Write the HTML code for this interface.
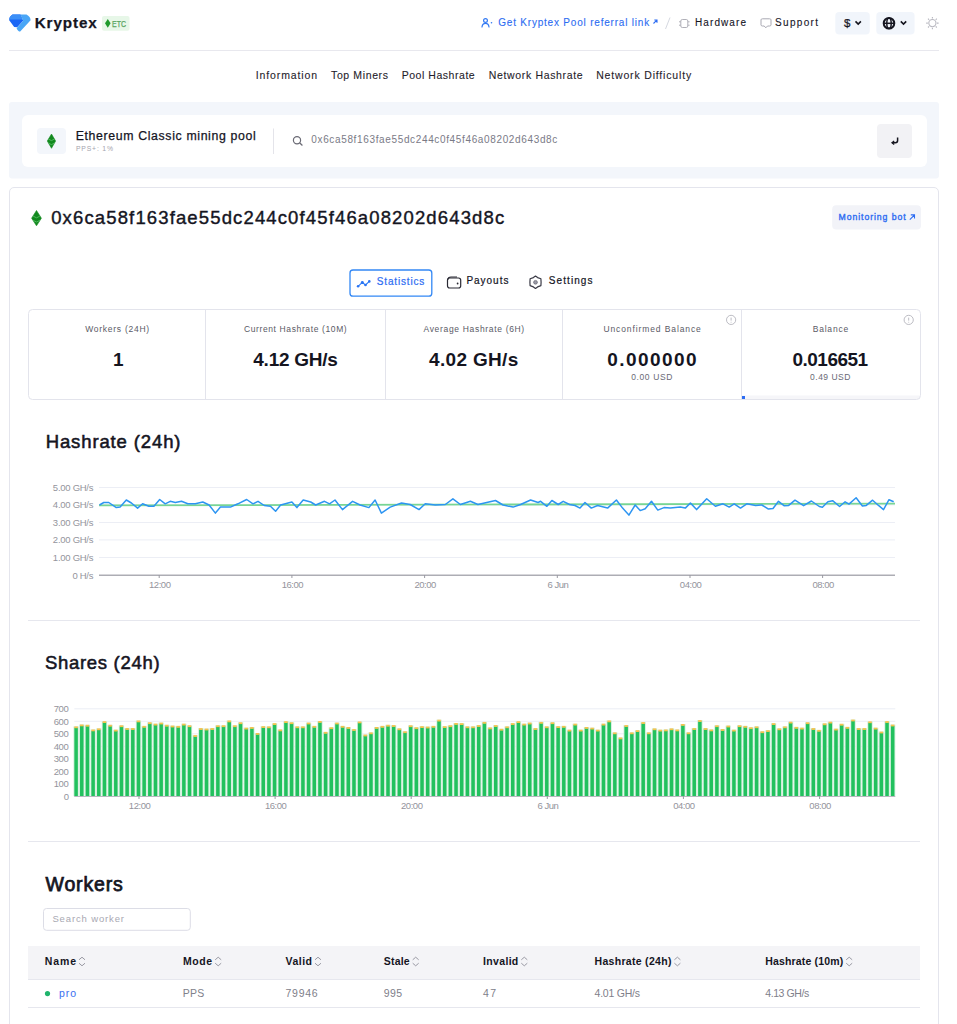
<!DOCTYPE html>
<html><head><meta charset="utf-8">
<style>
html,body{margin:0;padding:0;background:#fff;}
body{width:957px;height:1024px;overflow:hidden;position:relative;font-family:"Liberation Sans",sans-serif;}
.t{position:absolute;white-space:pre;}
.a{position:absolute;box-sizing:border-box;}
svg{position:absolute;overflow:visible;}
</style></head><body>
<!-- header -->
<svg style="left:0;top:0" width="957" height="1024" viewBox="0 0 957 1024">
  <!-- gem logo -->
  <path d="M12.5,14.6 L20.5,14.6 L23.2,20.8 L17.2,27.2 L14.2,27.0 L9.2,20.2 Q9,17 12.5,14.6Z" fill="#1a66f5"/>
  <path d="M12.5,14.6 L20.5,14.6 L22.6,19.4 L9.3,19.4 Q9.6,16.4 12.5,14.6Z" fill="#3b8ff7"/>
  <path d="M20.5,14.6 L26.5,14.6 Q30.5,17 30.6,20.2 L20.2,31.6 Q18,31.6 16.6,28.2 L23.2,20.8Z" fill="#4aa6f6"/>
  <!-- ETC badge -->
  <rect x="102" y="16" width="27.5" height="14.7" rx="2" fill="#e7f7e8"/>
  <path d="M107.8,19 L110.6,23.3 L107.8,27.7 L105,23.3Z" fill="#1f9a2c"/>
  <!-- user plus icon -->
  <circle cx="485.5" cy="20.5" r="1.9" fill="none" stroke="#3279f3" stroke-width="1.2"/>
  <path d="M482,27 Q482.4,23.4 485.5,23.4 Q488.6,23.4 489,27" fill="none" stroke="#3279f3" stroke-width="1.2" stroke-linecap="round"/>
  <circle cx="491.5" cy="22.8" r="0.8" fill="#3279f3"/>
  <!-- small arrow -->
  <path d="M653.5,23.5 L656.8,20.2 M654.3,20 L657,20 L657,22.7" stroke="#2c6cf2" stroke-width="1.1" fill="none"/>
  <!-- slash -->
  <path d="M670,17.5 L665.5,29" stroke="#d0d4dc" stroke-width="0.9"/>
  <!-- chip -->
  <rect x="680.8" y="19.5" width="7" height="8" rx="1.5" fill="none" stroke="#b0b0b8" stroke-width="1"/>
  <path d="M679,21.8 h1.8 M679,25.2 h1.8 M687.8,21.8 h1.8 M687.8,25.2 h1.8" stroke="#b0b0b8" stroke-width="1"/>
  <!-- chat -->
  <path d="M761,19.8 Q761,18.8 762.5,18.8 L769.5,18.8 Q771,18.8 771,19.8 L771,24.8 Q771,26 769.5,26 L767.5,26 L765.8,27.8 L764.2,26 L762.5,26 Q761,26 761,24.8Z" fill="none" stroke="#a8a8b2" stroke-width="1"/>
  <!-- $ button -->
  <rect x="835.3" y="12.1" width="34.5" height="22.5" rx="4" fill="#f1f5fb"/>
  <path d="M855.5,21.4 L858.2,24.1 L860.9,21.4" stroke="#15151f" stroke-width="1.6" fill="none"/>
  <!-- globe button -->
  <rect x="876.3" y="12.1" width="38.3" height="22.5" rx="4" fill="#f1f5fb"/>
  <circle cx="889" cy="23.3" r="5.3" fill="none" stroke="#15151f" stroke-width="2"/>
  <ellipse cx="889" cy="23.3" rx="2.2" ry="5.3" fill="none" stroke="#15151f" stroke-width="1.5"/>
  <path d="M883.6,23.3 h10.8" stroke="#15151f" stroke-width="1.5"/>
  <path d="M900.8,21.4 L903.5,24.1 L906.2,21.4" stroke="#15151f" stroke-width="1.6" fill="none"/>
  <!-- sun -->
  <circle cx="932.4" cy="23.1" r="3.6" fill="none" stroke="#b8b8c0" stroke-width="1.1"/>
  <path d="M932.4,16.9 v1.6 M932.4,27.7 v1.6 M926.2,23.1 h1.6 M937,23.1 h1.6 M928,18.7 l1.1,1.1 M935.7,26.4 l1.1,1.1 M928,27.5 l1.1,-1.1 M935.7,19.8 l1.1,-1.1" stroke="#b8b8c0" stroke-width="1.1"/>
  <!-- header divider -->
  <rect x="9" y="50" width="930" height="1" fill="#e8e8ee"/>

  <!-- search panel -->
  <rect x="9" y="102" width="930" height="76.5" rx="3" fill="#f3f6fb"/>
  <rect x="22" y="115" width="905" height="52" rx="6" fill="#ffffff"/>
  <rect x="37" y="128" width="29" height="26" rx="4" fill="#f3f6fb"/>
  <path d="M51.5,134 L55.6,141 L51.5,148.3 L47.3,141Z" fill="#12891f" stroke="#12891f" stroke-width="0.6" stroke-linejoin="round"/>
  <path d="M48.6,139.2 L51.5,140.6 L54.2,139.2 M48.6,143.2 L51.5,144.6 L54.2,143.2" stroke="#5cc46a" stroke-width="0.8" fill="none"/>
  <rect x="273" y="128.5" width="1" height="25.5" fill="#e4e4ea"/>
  <circle cx="297" cy="140.2" r="3.6" fill="none" stroke="#6a6a74" stroke-width="1.2"/>
  <path d="M299.6,142.8 L302.4,145.5" stroke="#6a6a74" stroke-width="1.2"/>
  <rect x="877" y="124" width="35" height="34" rx="4" fill="#f2f2f5"/>
  <path d="M897.6,137.6 L897.6,140.6 Q897.6,142.8 895.4,142.8 L892.5,142.8" stroke="#15151f" stroke-width="1.5" fill="none"/>
  <path d="M894.2,141 L892,142.8 L894.2,144.6" stroke="#15151f" stroke-width="1.3" fill="none"/>

  <!-- main card -->
  <rect x="9.5" y="187.5" width="929" height="900" rx="4.5" fill="#fff" stroke="#e4e5ed" stroke-width="1"/>
  <!-- eth icon title -->
  <path d="M36.5,210.5 L41.4,218.2 L36.5,225.8 L31.6,218.2Z" fill="#12891f" stroke="#12891f" stroke-width="0.6" stroke-linejoin="round"/>
  <path d="M33.2,216.2 L36.5,217.8 L39.8,216.2 M33.2,220.4 L36.5,222 L39.8,220.4" stroke="#5cc46a" stroke-width="0.8" fill="none"/>
  <!-- monitoring bot -->
  <rect x="832.2" y="205.3" width="88.8" height="24.1" rx="4" fill="#f2f3f8"/>
  <path d="M909.8,219.6 L914.3,215.1 M910.8,214.9 L914.5,214.9 L914.5,218.6" stroke="#2c6cf2" stroke-width="1.1" fill="none"/>

  <!-- tabs -->
  <rect x="350" y="270" width="81.8" height="26.2" rx="3" fill="none" stroke="#3388f5" stroke-width="1.3"/>
  <path d="M358.1,286.3 L362.3,282.3 L365.5,285 L369.3,281.4" stroke="#2f7cf4" stroke-width="1.1" fill="none" stroke-linejoin="round"/>
  <g fill="#2a74f4"><circle cx="358.1" cy="286.3" r="1.3"/><circle cx="362.3" cy="282.3" r="1.4"/><circle cx="365.5" cy="285" r="1.3"/><circle cx="369.3" cy="281.4" r="1.3"/></g>
  <rect x="447.5" y="278" width="13.2" height="10" rx="2.2" fill="none" stroke="#2a2a34" stroke-width="1.2"/>
  <path d="M448,279.5 Q448,277 451,277 L457,277" stroke="#2a2a34" stroke-width="1.1" fill="none"/>
  <circle cx="457.6" cy="283.5" r="0.9" fill="#2a2a34"/>
  <path d="M535.5,276 L537.6,277.6 L540.9,278.8 L541.1,282.3 L540.9,285.6 L537.6,286.9 L535.5,288.5 L533.4,286.9 L530.1,285.6 L529.9,282.3 L530.1,278.8 L533.4,277.6Z" fill="none" stroke="#3a3a46" stroke-width="1.2" stroke-linejoin="round"/>
  <circle cx="535.5" cy="282.3" r="1.9" fill="#9a9aa6" stroke="#5a5a66" stroke-width="0.6"/>

  <!-- stats -->
  <rect x="741" y="395.5" width="179" height="3.5" fill="#f6f6f9"/>
  <rect x="28.5" y="309.5" width="892" height="90" rx="4" fill="none" stroke="#e3e4ec" stroke-width="1"/>
  <rect x="205" y="310" width="1" height="89" fill="#e3e4ec"/>
  <rect x="385" y="310" width="1" height="89" fill="#e3e4ec"/>
  <rect x="562" y="310" width="1" height="89" fill="#e3e4ec"/>
  <rect x="741" y="310" width="1" height="89" fill="#e3e4ec"/>
  <circle cx="731.1" cy="319.9" r="4.6" fill="none" stroke="#b4b4bc" stroke-width="0.9"/>
  <path d="M731.1,317.6 v3 M731.1,321.8 v0.8" stroke="#b4b4bc" stroke-width="0.9"/>
  <circle cx="908.7" cy="319.9" r="4.6" fill="none" stroke="#b4b4bc" stroke-width="0.9"/>
  <path d="M908.7,317.6 v3 M908.7,321.8 v0.8" stroke="#b4b4bc" stroke-width="0.9"/>
  <rect x="742" y="396" width="3" height="3" fill="#2c6cf2"/>

  <!-- hashrate chart -->
  <g fill="#eceef5">
    <rect x="99" y="487" width="796" height="1"/>
    <rect x="99" y="504.4" width="796" height="1"/>
    <rect x="99" y="522" width="796" height="1"/>
    <rect x="99" y="539.4" width="796" height="1"/>
    <rect x="99" y="557" width="796" height="1"/>
  </g>
  <rect x="99" y="574.6" width="796" height="1.2" fill="#9a9aa2"/>
  <g fill="#9a9aa2">
    <rect x="158.7" y="575" width="1" height="3"/>
    <rect x="291.4" y="575" width="1" height="3"/>
    <rect x="424.1" y="575" width="1" height="3"/>
    <rect x="556.8" y="575" width="1" height="3"/>
    <rect x="689.5" y="575" width="1" height="3"/>
    <rect x="822.1" y="575" width="1" height="3"/>
  </g>
  <path d="M99,505.4 L895,503.6" stroke="#62d083" stroke-width="1.8" opacity="0.85"/>
  <polyline points="99.5,505.0 103.8,502.5 108.8,502.5 116.3,507.6 120.1,507.1 126.3,500.0 131.4,503.0 137.6,508.1 142.6,503.8 148.9,506.3 153.9,506.3 159.7,499.5 165.2,503.8 170.2,501.3 175.3,502.5 181.5,501.3 187.8,503.8 195.3,503.8 202.8,502.0 209.1,505.0 215.4,513.1 220.4,507.1 230.4,507.1 237.9,503.8 246.7,499.5 253.0,503.8 258.0,501.3 264.3,505.5 270.5,506.3 275.6,511.3 280.6,505.0 291.9,502.0 296.9,507.6 303.2,500.0 310.7,502.0 315.7,505.0 324.5,501.3 329.5,503.8 335.0,500.0 342.5,509.6 352.6,501.3 360.1,505.0 368.9,507.6 375.1,500.0 381.4,513.1 390.2,507.1 401.5,503.0 410.2,504.5 419.0,509.6 425.3,503.8 435.3,505.0 445.3,504.5 452.9,498.8 460.4,504.5 470.4,501.3 477.9,504.5 495.5,500.5 503.0,505.0 513.1,507.1 520.6,504.5 530.6,500.0 538.1,502.5 540.6,501.3 546.9,506.3 551.9,500.5 558.2,504.5 563.2,501.3 569.5,504.5 575.0,505.5 580.0,508.1 585.0,502.5 591.3,508.1 597.6,505.5 607.6,508.1 616.4,500.0 622.6,508.1 628.9,515.1 635.2,505.0 640.2,510.6 645.2,508.8 651.5,501.3 657.8,510.1 664.0,507.6 670.3,508.1 680.3,507.1 685.3,508.1 690.4,503.0 696.6,509.6 706.7,498.8 715.4,506.3 723.0,503.8 729.2,507.1 734.2,503.8 740.5,508.1 746.8,503.8 755.6,505.5 761.3,504.9 761.8,505.0 768.1,508.8 768.3,509.1 773.0,508.5 778.5,501.3 784.0,505.7 788.7,505.4 795.0,500.2 803.6,505.7 811.4,501.0 819.3,506.5 822.4,507.2 827.9,501.8 832.6,500.7 839.6,506.5 845.1,501.8 849.0,504.1 856.1,497.8 862.4,506.0 866.3,505.4 872.6,500.2 878.8,505.7 883.5,509.6 889.0,499.7 893.7,501.8" fill="none" stroke="#2d95f2" stroke-width="1.5" stroke-linejoin="round"/>
  <rect x="28" y="620" width="892" height="1" fill="#e6e7ee"/>

  <!-- shares chart -->
  <g fill="#eceef5">
    <rect x="74.3" y="708.3" width="821" height="1"/>
    <rect x="74.3" y="720.8" width="821" height="1"/>
    <rect x="74.3" y="733.3" width="821" height="1"/>
    <rect x="74.3" y="745.8" width="821" height="1"/>
    <rect x="74.3" y="758.3" width="821" height="1"/>
    <rect x="74.3" y="770.8" width="821" height="1"/>
    <rect x="74.3" y="783.3" width="821" height="1"/>
  </g>
  <rect x="73.46" y="726.40" width="5.27" height="69.80" fill="#cdeed9"/>
<rect x="74.35" y="727.70" width="3.5" height="68.50" fill="#22c15e"/>
<rect x="74.35" y="726.40" width="3.5" height="1.8" fill="#f5c24e"/>
<rect x="79.14" y="724.50" width="5.27" height="71.70" fill="#cdeed9"/>
<rect x="80.02" y="725.80" width="3.5" height="70.40" fill="#22c15e"/>
<rect x="80.02" y="724.50" width="3.5" height="1.8" fill="#f5c24e"/>
<rect x="84.81" y="724.80" width="5.27" height="71.40" fill="#cdeed9"/>
<rect x="85.69" y="726.10" width="3.5" height="70.10" fill="#22c15e"/>
<rect x="85.69" y="724.80" width="3.5" height="1.8" fill="#f5c24e"/>
<rect x="90.48" y="729.50" width="5.27" height="66.70" fill="#cdeed9"/>
<rect x="91.36" y="730.80" width="3.5" height="65.40" fill="#22c15e"/>
<rect x="91.36" y="729.50" width="3.5" height="1.8" fill="#f5c24e"/>
<rect x="96.15" y="728.40" width="5.27" height="67.80" fill="#cdeed9"/>
<rect x="97.03" y="729.70" width="3.5" height="66.50" fill="#22c15e"/>
<rect x="97.03" y="728.40" width="3.5" height="1.8" fill="#f5c24e"/>
<rect x="101.82" y="721.20" width="5.27" height="75.00" fill="#cdeed9"/>
<rect x="102.70" y="722.50" width="3.5" height="73.70" fill="#22c15e"/>
<rect x="102.70" y="721.20" width="3.5" height="1.8" fill="#f5c24e"/>
<rect x="107.49" y="724.80" width="5.27" height="71.40" fill="#cdeed9"/>
<rect x="108.38" y="726.10" width="3.5" height="70.10" fill="#22c15e"/>
<rect x="108.38" y="724.80" width="3.5" height="1.8" fill="#f5c24e"/>
<rect x="113.16" y="729.70" width="5.27" height="66.50" fill="#cdeed9"/>
<rect x="114.05" y="731.00" width="3.5" height="65.20" fill="#22c15e"/>
<rect x="114.05" y="729.70" width="3.5" height="1.8" fill="#f5c24e"/>
<rect x="118.83" y="725.30" width="5.27" height="70.90" fill="#cdeed9"/>
<rect x="119.72" y="726.60" width="3.5" height="69.60" fill="#22c15e"/>
<rect x="119.72" y="725.30" width="3.5" height="1.8" fill="#f5c24e"/>
<rect x="124.50" y="728.10" width="5.27" height="68.10" fill="#cdeed9"/>
<rect x="125.39" y="729.40" width="3.5" height="66.80" fill="#22c15e"/>
<rect x="125.39" y="728.10" width="3.5" height="1.8" fill="#f5c24e"/>
<rect x="130.17" y="728.10" width="5.27" height="68.10" fill="#cdeed9"/>
<rect x="131.06" y="729.40" width="3.5" height="66.80" fill="#22c15e"/>
<rect x="131.06" y="728.10" width="3.5" height="1.8" fill="#f5c24e"/>
<rect x="135.84" y="720.50" width="5.27" height="75.70" fill="#cdeed9"/>
<rect x="136.73" y="721.80" width="3.5" height="74.40" fill="#22c15e"/>
<rect x="136.73" y="720.50" width="3.5" height="1.8" fill="#f5c24e"/>
<rect x="141.51" y="725.90" width="5.27" height="70.30" fill="#cdeed9"/>
<rect x="142.40" y="727.20" width="3.5" height="69.00" fill="#22c15e"/>
<rect x="142.40" y="725.90" width="3.5" height="1.8" fill="#f5c24e"/>
<rect x="147.19" y="722.30" width="5.27" height="73.90" fill="#cdeed9"/>
<rect x="148.07" y="723.60" width="3.5" height="72.60" fill="#22c15e"/>
<rect x="148.07" y="722.30" width="3.5" height="1.8" fill="#f5c24e"/>
<rect x="152.86" y="723.70" width="5.27" height="72.50" fill="#cdeed9"/>
<rect x="153.74" y="725.00" width="3.5" height="71.20" fill="#22c15e"/>
<rect x="153.74" y="723.70" width="3.5" height="1.8" fill="#f5c24e"/>
<rect x="158.53" y="722.60" width="5.27" height="73.60" fill="#cdeed9"/>
<rect x="159.41" y="723.90" width="3.5" height="72.30" fill="#22c15e"/>
<rect x="159.41" y="722.60" width="3.5" height="1.8" fill="#f5c24e"/>
<rect x="164.20" y="724.80" width="5.27" height="71.40" fill="#cdeed9"/>
<rect x="165.08" y="726.10" width="3.5" height="70.10" fill="#22c15e"/>
<rect x="165.08" y="724.80" width="3.5" height="1.8" fill="#f5c24e"/>
<rect x="169.87" y="725.60" width="5.27" height="70.60" fill="#cdeed9"/>
<rect x="170.75" y="726.90" width="3.5" height="69.30" fill="#22c15e"/>
<rect x="170.75" y="725.60" width="3.5" height="1.8" fill="#f5c24e"/>
<rect x="175.54" y="725.90" width="5.27" height="70.30" fill="#cdeed9"/>
<rect x="176.43" y="727.20" width="3.5" height="69.00" fill="#22c15e"/>
<rect x="176.43" y="725.90" width="3.5" height="1.8" fill="#f5c24e"/>
<rect x="181.21" y="723.70" width="5.27" height="72.50" fill="#cdeed9"/>
<rect x="182.10" y="725.00" width="3.5" height="71.20" fill="#22c15e"/>
<rect x="182.10" y="723.70" width="3.5" height="1.8" fill="#f5c24e"/>
<rect x="186.88" y="725.30" width="5.27" height="70.90" fill="#cdeed9"/>
<rect x="187.77" y="726.60" width="3.5" height="69.60" fill="#22c15e"/>
<rect x="187.77" y="725.30" width="3.5" height="1.8" fill="#f5c24e"/>
<rect x="192.55" y="735.10" width="5.27" height="61.10" fill="#cdeed9"/>
<rect x="193.44" y="736.40" width="3.5" height="59.80" fill="#22c15e"/>
<rect x="193.44" y="735.10" width="3.5" height="1.8" fill="#f5c24e"/>
<rect x="198.22" y="728.10" width="5.27" height="68.10" fill="#cdeed9"/>
<rect x="199.11" y="729.40" width="3.5" height="66.80" fill="#22c15e"/>
<rect x="199.11" y="728.10" width="3.5" height="1.8" fill="#f5c24e"/>
<rect x="203.89" y="728.60" width="5.27" height="67.60" fill="#cdeed9"/>
<rect x="204.78" y="729.90" width="3.5" height="66.30" fill="#22c15e"/>
<rect x="204.78" y="728.60" width="3.5" height="1.8" fill="#f5c24e"/>
<rect x="209.56" y="728.10" width="5.27" height="68.10" fill="#cdeed9"/>
<rect x="210.45" y="729.40" width="3.5" height="66.80" fill="#22c15e"/>
<rect x="210.45" y="728.10" width="3.5" height="1.8" fill="#f5c24e"/>
<rect x="215.24" y="725.30" width="5.27" height="70.90" fill="#cdeed9"/>
<rect x="216.12" y="726.60" width="3.5" height="69.60" fill="#22c15e"/>
<rect x="216.12" y="725.30" width="3.5" height="1.8" fill="#f5c24e"/>
<rect x="220.91" y="725.30" width="5.27" height="70.90" fill="#cdeed9"/>
<rect x="221.79" y="726.60" width="3.5" height="69.60" fill="#22c15e"/>
<rect x="221.79" y="725.30" width="3.5" height="1.8" fill="#f5c24e"/>
<rect x="226.58" y="720.50" width="5.27" height="75.70" fill="#cdeed9"/>
<rect x="227.46" y="721.80" width="3.5" height="74.40" fill="#22c15e"/>
<rect x="227.46" y="720.50" width="3.5" height="1.8" fill="#f5c24e"/>
<rect x="232.25" y="725.30" width="5.27" height="70.90" fill="#cdeed9"/>
<rect x="233.13" y="726.60" width="3.5" height="69.60" fill="#22c15e"/>
<rect x="233.13" y="725.30" width="3.5" height="1.8" fill="#f5c24e"/>
<rect x="237.92" y="722.30" width="5.27" height="73.90" fill="#cdeed9"/>
<rect x="238.80" y="723.60" width="3.5" height="72.60" fill="#22c15e"/>
<rect x="238.80" y="722.30" width="3.5" height="1.8" fill="#f5c24e"/>
<rect x="243.59" y="727.70" width="5.27" height="68.50" fill="#cdeed9"/>
<rect x="244.47" y="729.00" width="3.5" height="67.20" fill="#22c15e"/>
<rect x="244.47" y="727.70" width="3.5" height="1.8" fill="#f5c24e"/>
<rect x="249.26" y="727.00" width="5.27" height="69.20" fill="#cdeed9"/>
<rect x="250.15" y="728.30" width="3.5" height="67.90" fill="#22c15e"/>
<rect x="250.15" y="727.00" width="3.5" height="1.8" fill="#f5c24e"/>
<rect x="254.93" y="733.00" width="5.27" height="63.20" fill="#cdeed9"/>
<rect x="255.82" y="734.30" width="3.5" height="61.90" fill="#22c15e"/>
<rect x="255.82" y="733.00" width="3.5" height="1.8" fill="#f5c24e"/>
<rect x="260.60" y="726.20" width="5.27" height="70.00" fill="#cdeed9"/>
<rect x="261.49" y="727.50" width="3.5" height="68.70" fill="#22c15e"/>
<rect x="261.49" y="726.20" width="3.5" height="1.8" fill="#f5c24e"/>
<rect x="266.27" y="726.40" width="5.27" height="69.80" fill="#cdeed9"/>
<rect x="267.16" y="727.70" width="3.5" height="68.50" fill="#22c15e"/>
<rect x="267.16" y="726.40" width="3.5" height="1.8" fill="#f5c24e"/>
<rect x="271.94" y="723.20" width="5.27" height="73.00" fill="#cdeed9"/>
<rect x="272.83" y="724.50" width="3.5" height="71.70" fill="#22c15e"/>
<rect x="272.83" y="723.20" width="3.5" height="1.8" fill="#f5c24e"/>
<rect x="277.61" y="729.50" width="5.27" height="66.70" fill="#cdeed9"/>
<rect x="278.50" y="730.80" width="3.5" height="65.40" fill="#22c15e"/>
<rect x="278.50" y="729.50" width="3.5" height="1.8" fill="#f5c24e"/>
<rect x="283.29" y="721.20" width="5.27" height="75.00" fill="#cdeed9"/>
<rect x="284.17" y="722.50" width="3.5" height="73.70" fill="#22c15e"/>
<rect x="284.17" y="721.20" width="3.5" height="1.8" fill="#f5c24e"/>
<rect x="288.96" y="722.30" width="5.27" height="73.90" fill="#cdeed9"/>
<rect x="289.84" y="723.60" width="3.5" height="72.60" fill="#22c15e"/>
<rect x="289.84" y="722.30" width="3.5" height="1.8" fill="#f5c24e"/>
<rect x="294.63" y="726.40" width="5.27" height="69.80" fill="#cdeed9"/>
<rect x="295.51" y="727.70" width="3.5" height="68.50" fill="#22c15e"/>
<rect x="295.51" y="726.40" width="3.5" height="1.8" fill="#f5c24e"/>
<rect x="300.30" y="726.40" width="5.27" height="69.80" fill="#cdeed9"/>
<rect x="301.18" y="727.70" width="3.5" height="68.50" fill="#22c15e"/>
<rect x="301.18" y="726.40" width="3.5" height="1.8" fill="#f5c24e"/>
<rect x="305.97" y="722.60" width="5.27" height="73.60" fill="#cdeed9"/>
<rect x="306.85" y="723.90" width="3.5" height="72.30" fill="#22c15e"/>
<rect x="306.85" y="722.60" width="3.5" height="1.8" fill="#f5c24e"/>
<rect x="311.64" y="725.90" width="5.27" height="70.30" fill="#cdeed9"/>
<rect x="312.52" y="727.20" width="3.5" height="69.00" fill="#22c15e"/>
<rect x="312.52" y="725.90" width="3.5" height="1.8" fill="#f5c24e"/>
<rect x="317.31" y="721.00" width="5.27" height="75.20" fill="#cdeed9"/>
<rect x="318.20" y="722.30" width="3.5" height="73.90" fill="#22c15e"/>
<rect x="318.20" y="721.00" width="3.5" height="1.8" fill="#f5c24e"/>
<rect x="322.98" y="731.90" width="5.27" height="64.30" fill="#cdeed9"/>
<rect x="323.87" y="733.20" width="3.5" height="63.00" fill="#22c15e"/>
<rect x="323.87" y="731.90" width="3.5" height="1.8" fill="#f5c24e"/>
<rect x="328.65" y="727.30" width="5.27" height="68.90" fill="#cdeed9"/>
<rect x="329.54" y="728.60" width="3.5" height="67.60" fill="#22c15e"/>
<rect x="329.54" y="727.30" width="3.5" height="1.8" fill="#f5c24e"/>
<rect x="334.32" y="722.60" width="5.27" height="73.60" fill="#cdeed9"/>
<rect x="335.21" y="723.90" width="3.5" height="72.30" fill="#22c15e"/>
<rect x="335.21" y="722.60" width="3.5" height="1.8" fill="#f5c24e"/>
<rect x="339.99" y="725.90" width="5.27" height="70.30" fill="#cdeed9"/>
<rect x="340.88" y="727.20" width="3.5" height="69.00" fill="#22c15e"/>
<rect x="340.88" y="725.90" width="3.5" height="1.8" fill="#f5c24e"/>
<rect x="345.66" y="727.00" width="5.27" height="69.20" fill="#cdeed9"/>
<rect x="346.55" y="728.30" width="3.5" height="67.90" fill="#22c15e"/>
<rect x="346.55" y="727.00" width="3.5" height="1.8" fill="#f5c24e"/>
<rect x="351.34" y="729.10" width="5.27" height="67.10" fill="#cdeed9"/>
<rect x="352.22" y="730.40" width="3.5" height="65.80" fill="#22c15e"/>
<rect x="352.22" y="729.10" width="3.5" height="1.8" fill="#f5c24e"/>
<rect x="357.01" y="721.50" width="5.27" height="74.70" fill="#cdeed9"/>
<rect x="357.89" y="722.80" width="3.5" height="73.40" fill="#22c15e"/>
<rect x="357.89" y="721.50" width="3.5" height="1.8" fill="#f5c24e"/>
<rect x="362.68" y="734.60" width="5.27" height="61.60" fill="#cdeed9"/>
<rect x="363.56" y="735.90" width="3.5" height="60.30" fill="#22c15e"/>
<rect x="363.56" y="734.60" width="3.5" height="1.8" fill="#f5c24e"/>
<rect x="368.35" y="732.40" width="5.27" height="63.80" fill="#cdeed9"/>
<rect x="369.23" y="733.70" width="3.5" height="62.50" fill="#22c15e"/>
<rect x="369.23" y="732.40" width="3.5" height="1.8" fill="#f5c24e"/>
<rect x="374.02" y="727.00" width="5.27" height="69.20" fill="#cdeed9"/>
<rect x="374.90" y="728.30" width="3.5" height="67.90" fill="#22c15e"/>
<rect x="374.90" y="727.00" width="3.5" height="1.8" fill="#f5c24e"/>
<rect x="379.69" y="725.90" width="5.27" height="70.30" fill="#cdeed9"/>
<rect x="380.58" y="727.20" width="3.5" height="69.00" fill="#22c15e"/>
<rect x="380.58" y="725.90" width="3.5" height="1.8" fill="#f5c24e"/>
<rect x="385.36" y="724.80" width="5.27" height="71.40" fill="#cdeed9"/>
<rect x="386.25" y="726.10" width="3.5" height="70.10" fill="#22c15e"/>
<rect x="386.25" y="724.80" width="3.5" height="1.8" fill="#f5c24e"/>
<rect x="391.03" y="725.10" width="5.27" height="71.10" fill="#cdeed9"/>
<rect x="391.92" y="726.40" width="3.5" height="69.80" fill="#22c15e"/>
<rect x="391.92" y="725.10" width="3.5" height="1.8" fill="#f5c24e"/>
<rect x="396.70" y="728.40" width="5.27" height="67.80" fill="#cdeed9"/>
<rect x="397.59" y="729.70" width="3.5" height="66.50" fill="#22c15e"/>
<rect x="397.59" y="728.40" width="3.5" height="1.8" fill="#f5c24e"/>
<rect x="402.37" y="731.30" width="5.27" height="64.90" fill="#cdeed9"/>
<rect x="403.26" y="732.60" width="3.5" height="63.60" fill="#22c15e"/>
<rect x="403.26" y="731.30" width="3.5" height="1.8" fill="#f5c24e"/>
<rect x="408.04" y="725.30" width="5.27" height="70.90" fill="#cdeed9"/>
<rect x="408.93" y="726.60" width="3.5" height="69.60" fill="#22c15e"/>
<rect x="408.93" y="725.30" width="3.5" height="1.8" fill="#f5c24e"/>
<rect x="413.71" y="727.30" width="5.27" height="68.90" fill="#cdeed9"/>
<rect x="414.60" y="728.60" width="3.5" height="67.60" fill="#22c15e"/>
<rect x="414.60" y="727.30" width="3.5" height="1.8" fill="#f5c24e"/>
<rect x="419.39" y="726.20" width="5.27" height="70.00" fill="#cdeed9"/>
<rect x="420.27" y="727.50" width="3.5" height="68.70" fill="#22c15e"/>
<rect x="420.27" y="726.20" width="3.5" height="1.8" fill="#f5c24e"/>
<rect x="425.06" y="726.60" width="5.27" height="69.60" fill="#cdeed9"/>
<rect x="425.94" y="727.90" width="3.5" height="68.30" fill="#22c15e"/>
<rect x="425.94" y="726.60" width="3.5" height="1.8" fill="#f5c24e"/>
<rect x="430.73" y="725.90" width="5.27" height="70.30" fill="#cdeed9"/>
<rect x="431.61" y="727.20" width="3.5" height="69.00" fill="#22c15e"/>
<rect x="431.61" y="725.90" width="3.5" height="1.8" fill="#f5c24e"/>
<rect x="436.40" y="719.70" width="5.27" height="76.50" fill="#cdeed9"/>
<rect x="437.28" y="721.00" width="3.5" height="75.20" fill="#22c15e"/>
<rect x="437.28" y="719.70" width="3.5" height="1.8" fill="#f5c24e"/>
<rect x="442.07" y="726.20" width="5.27" height="70.00" fill="#cdeed9"/>
<rect x="442.95" y="727.50" width="3.5" height="68.70" fill="#22c15e"/>
<rect x="442.95" y="726.20" width="3.5" height="1.8" fill="#f5c24e"/>
<rect x="447.74" y="725.30" width="5.27" height="70.90" fill="#cdeed9"/>
<rect x="448.62" y="726.60" width="3.5" height="69.60" fill="#22c15e"/>
<rect x="448.62" y="725.30" width="3.5" height="1.8" fill="#f5c24e"/>
<rect x="453.41" y="723.00" width="5.27" height="73.20" fill="#cdeed9"/>
<rect x="454.30" y="724.30" width="3.5" height="71.90" fill="#22c15e"/>
<rect x="454.30" y="723.00" width="3.5" height="1.8" fill="#f5c24e"/>
<rect x="459.08" y="723.20" width="5.27" height="73.00" fill="#cdeed9"/>
<rect x="459.97" y="724.50" width="3.5" height="71.70" fill="#22c15e"/>
<rect x="459.97" y="723.20" width="3.5" height="1.8" fill="#f5c24e"/>
<rect x="464.75" y="726.40" width="5.27" height="69.80" fill="#cdeed9"/>
<rect x="465.64" y="727.70" width="3.5" height="68.50" fill="#22c15e"/>
<rect x="465.64" y="726.40" width="3.5" height="1.8" fill="#f5c24e"/>
<rect x="470.42" y="726.40" width="5.27" height="69.80" fill="#cdeed9"/>
<rect x="471.31" y="727.70" width="3.5" height="68.50" fill="#22c15e"/>
<rect x="471.31" y="726.40" width="3.5" height="1.8" fill="#f5c24e"/>
<rect x="476.09" y="725.10" width="5.27" height="71.10" fill="#cdeed9"/>
<rect x="476.98" y="726.40" width="3.5" height="69.80" fill="#22c15e"/>
<rect x="476.98" y="725.10" width="3.5" height="1.8" fill="#f5c24e"/>
<rect x="481.76" y="721.90" width="5.27" height="74.30" fill="#cdeed9"/>
<rect x="482.65" y="723.20" width="3.5" height="73.00" fill="#22c15e"/>
<rect x="482.65" y="721.90" width="3.5" height="1.8" fill="#f5c24e"/>
<rect x="487.44" y="727.50" width="5.27" height="68.70" fill="#cdeed9"/>
<rect x="488.32" y="728.80" width="3.5" height="67.40" fill="#22c15e"/>
<rect x="488.32" y="727.50" width="3.5" height="1.8" fill="#f5c24e"/>
<rect x="493.11" y="725.10" width="5.27" height="71.10" fill="#cdeed9"/>
<rect x="493.99" y="726.40" width="3.5" height="69.80" fill="#22c15e"/>
<rect x="493.99" y="725.10" width="3.5" height="1.8" fill="#f5c24e"/>
<rect x="498.78" y="728.80" width="5.27" height="67.40" fill="#cdeed9"/>
<rect x="499.66" y="730.10" width="3.5" height="66.10" fill="#22c15e"/>
<rect x="499.66" y="728.80" width="3.5" height="1.8" fill="#f5c24e"/>
<rect x="504.45" y="726.40" width="5.27" height="69.80" fill="#cdeed9"/>
<rect x="505.33" y="727.70" width="3.5" height="68.50" fill="#22c15e"/>
<rect x="505.33" y="726.40" width="3.5" height="1.8" fill="#f5c24e"/>
<rect x="510.12" y="723.20" width="5.27" height="73.00" fill="#cdeed9"/>
<rect x="511.00" y="724.50" width="3.5" height="71.70" fill="#22c15e"/>
<rect x="511.00" y="723.20" width="3.5" height="1.8" fill="#f5c24e"/>
<rect x="515.79" y="721.20" width="5.27" height="75.00" fill="#cdeed9"/>
<rect x="516.67" y="722.50" width="3.5" height="73.70" fill="#22c15e"/>
<rect x="516.67" y="721.20" width="3.5" height="1.8" fill="#f5c24e"/>
<rect x="521.46" y="723.70" width="5.27" height="72.50" fill="#cdeed9"/>
<rect x="522.35" y="725.00" width="3.5" height="71.20" fill="#22c15e"/>
<rect x="522.35" y="723.70" width="3.5" height="1.8" fill="#f5c24e"/>
<rect x="527.13" y="722.60" width="5.27" height="73.60" fill="#cdeed9"/>
<rect x="528.02" y="723.90" width="3.5" height="72.30" fill="#22c15e"/>
<rect x="528.02" y="722.60" width="3.5" height="1.8" fill="#f5c24e"/>
<rect x="532.80" y="728.10" width="5.27" height="68.10" fill="#cdeed9"/>
<rect x="533.69" y="729.40" width="3.5" height="66.80" fill="#22c15e"/>
<rect x="533.69" y="728.10" width="3.5" height="1.8" fill="#f5c24e"/>
<rect x="538.47" y="721.90" width="5.27" height="74.30" fill="#cdeed9"/>
<rect x="539.36" y="723.20" width="3.5" height="73.00" fill="#22c15e"/>
<rect x="539.36" y="721.90" width="3.5" height="1.8" fill="#f5c24e"/>
<rect x="544.14" y="726.40" width="5.27" height="69.80" fill="#cdeed9"/>
<rect x="545.03" y="727.70" width="3.5" height="68.50" fill="#22c15e"/>
<rect x="545.03" y="726.40" width="3.5" height="1.8" fill="#f5c24e"/>
<rect x="549.81" y="722.30" width="5.27" height="73.90" fill="#cdeed9"/>
<rect x="550.70" y="723.60" width="3.5" height="72.60" fill="#22c15e"/>
<rect x="550.70" y="722.30" width="3.5" height="1.8" fill="#f5c24e"/>
<rect x="555.49" y="726.20" width="5.27" height="70.00" fill="#cdeed9"/>
<rect x="556.37" y="727.50" width="3.5" height="68.70" fill="#22c15e"/>
<rect x="556.37" y="726.20" width="3.5" height="1.8" fill="#f5c24e"/>
<rect x="561.16" y="725.90" width="5.27" height="70.30" fill="#cdeed9"/>
<rect x="562.04" y="727.20" width="3.5" height="69.00" fill="#22c15e"/>
<rect x="562.04" y="725.90" width="3.5" height="1.8" fill="#f5c24e"/>
<rect x="566.83" y="729.70" width="5.27" height="66.50" fill="#cdeed9"/>
<rect x="567.71" y="731.00" width="3.5" height="65.20" fill="#22c15e"/>
<rect x="567.71" y="729.70" width="3.5" height="1.8" fill="#f5c24e"/>
<rect x="572.50" y="723.70" width="5.27" height="72.50" fill="#cdeed9"/>
<rect x="573.38" y="725.00" width="3.5" height="71.20" fill="#22c15e"/>
<rect x="573.38" y="723.70" width="3.5" height="1.8" fill="#f5c24e"/>
<rect x="578.17" y="729.70" width="5.27" height="66.50" fill="#cdeed9"/>
<rect x="579.05" y="731.00" width="3.5" height="65.20" fill="#22c15e"/>
<rect x="579.05" y="729.70" width="3.5" height="1.8" fill="#f5c24e"/>
<rect x="583.84" y="727.00" width="5.27" height="69.20" fill="#cdeed9"/>
<rect x="584.73" y="728.30" width="3.5" height="67.90" fill="#22c15e"/>
<rect x="584.73" y="727.00" width="3.5" height="1.8" fill="#f5c24e"/>
<rect x="589.51" y="727.70" width="5.27" height="68.50" fill="#cdeed9"/>
<rect x="590.40" y="729.00" width="3.5" height="67.20" fill="#22c15e"/>
<rect x="590.40" y="727.70" width="3.5" height="1.8" fill="#f5c24e"/>
<rect x="595.18" y="729.70" width="5.27" height="66.50" fill="#cdeed9"/>
<rect x="596.07" y="731.00" width="3.5" height="65.20" fill="#22c15e"/>
<rect x="596.07" y="729.70" width="3.5" height="1.8" fill="#f5c24e"/>
<rect x="600.85" y="723.70" width="5.27" height="72.50" fill="#cdeed9"/>
<rect x="601.74" y="725.00" width="3.5" height="71.20" fill="#22c15e"/>
<rect x="601.74" y="723.70" width="3.5" height="1.8" fill="#f5c24e"/>
<rect x="606.52" y="720.50" width="5.27" height="75.70" fill="#cdeed9"/>
<rect x="607.41" y="721.80" width="3.5" height="74.40" fill="#22c15e"/>
<rect x="607.41" y="720.50" width="3.5" height="1.8" fill="#f5c24e"/>
<rect x="612.19" y="732.40" width="5.27" height="63.80" fill="#cdeed9"/>
<rect x="613.08" y="733.70" width="3.5" height="62.50" fill="#22c15e"/>
<rect x="613.08" y="732.40" width="3.5" height="1.8" fill="#f5c24e"/>
<rect x="617.86" y="737.50" width="5.27" height="58.70" fill="#cdeed9"/>
<rect x="618.75" y="738.80" width="3.5" height="57.40" fill="#22c15e"/>
<rect x="618.75" y="737.50" width="3.5" height="1.8" fill="#f5c24e"/>
<rect x="623.54" y="725.10" width="5.27" height="71.10" fill="#cdeed9"/>
<rect x="624.42" y="726.40" width="3.5" height="69.80" fill="#22c15e"/>
<rect x="624.42" y="725.10" width="3.5" height="1.8" fill="#f5c24e"/>
<rect x="629.21" y="732.40" width="5.27" height="63.80" fill="#cdeed9"/>
<rect x="630.09" y="733.70" width="3.5" height="62.50" fill="#22c15e"/>
<rect x="630.09" y="732.40" width="3.5" height="1.8" fill="#f5c24e"/>
<rect x="634.88" y="730.20" width="5.27" height="66.00" fill="#cdeed9"/>
<rect x="635.76" y="731.50" width="3.5" height="64.70" fill="#22c15e"/>
<rect x="635.76" y="730.20" width="3.5" height="1.8" fill="#f5c24e"/>
<rect x="640.55" y="722.10" width="5.27" height="74.10" fill="#cdeed9"/>
<rect x="641.43" y="723.40" width="3.5" height="72.80" fill="#22c15e"/>
<rect x="641.43" y="722.10" width="3.5" height="1.8" fill="#f5c24e"/>
<rect x="646.22" y="732.40" width="5.27" height="63.80" fill="#cdeed9"/>
<rect x="647.10" y="733.70" width="3.5" height="62.50" fill="#22c15e"/>
<rect x="647.10" y="732.40" width="3.5" height="1.8" fill="#f5c24e"/>
<rect x="651.89" y="728.40" width="5.27" height="67.80" fill="#cdeed9"/>
<rect x="652.77" y="729.70" width="3.5" height="66.50" fill="#22c15e"/>
<rect x="652.77" y="728.40" width="3.5" height="1.8" fill="#f5c24e"/>
<rect x="657.56" y="729.70" width="5.27" height="66.50" fill="#cdeed9"/>
<rect x="658.45" y="731.00" width="3.5" height="65.20" fill="#22c15e"/>
<rect x="658.45" y="729.70" width="3.5" height="1.8" fill="#f5c24e"/>
<rect x="663.23" y="729.50" width="5.27" height="66.70" fill="#cdeed9"/>
<rect x="664.12" y="730.80" width="3.5" height="65.40" fill="#22c15e"/>
<rect x="664.12" y="729.50" width="3.5" height="1.8" fill="#f5c24e"/>
<rect x="668.90" y="728.40" width="5.27" height="67.80" fill="#cdeed9"/>
<rect x="669.79" y="729.70" width="3.5" height="66.50" fill="#22c15e"/>
<rect x="669.79" y="728.40" width="3.5" height="1.8" fill="#f5c24e"/>
<rect x="674.57" y="729.50" width="5.27" height="66.70" fill="#cdeed9"/>
<rect x="675.46" y="730.80" width="3.5" height="65.40" fill="#22c15e"/>
<rect x="675.46" y="729.50" width="3.5" height="1.8" fill="#f5c24e"/>
<rect x="680.24" y="724.00" width="5.27" height="72.20" fill="#cdeed9"/>
<rect x="681.13" y="725.30" width="3.5" height="70.90" fill="#22c15e"/>
<rect x="681.13" y="724.00" width="3.5" height="1.8" fill="#f5c24e"/>
<rect x="685.91" y="732.40" width="5.27" height="63.80" fill="#cdeed9"/>
<rect x="686.80" y="733.70" width="3.5" height="62.50" fill="#22c15e"/>
<rect x="686.80" y="732.40" width="3.5" height="1.8" fill="#f5c24e"/>
<rect x="691.59" y="728.10" width="5.27" height="68.10" fill="#cdeed9"/>
<rect x="692.47" y="729.40" width="3.5" height="66.80" fill="#22c15e"/>
<rect x="692.47" y="728.10" width="3.5" height="1.8" fill="#f5c24e"/>
<rect x="697.26" y="720.10" width="5.27" height="76.10" fill="#cdeed9"/>
<rect x="698.14" y="721.40" width="3.5" height="74.80" fill="#22c15e"/>
<rect x="698.14" y="720.10" width="3.5" height="1.8" fill="#f5c24e"/>
<rect x="702.93" y="728.10" width="5.27" height="68.10" fill="#cdeed9"/>
<rect x="703.81" y="729.40" width="3.5" height="66.80" fill="#22c15e"/>
<rect x="703.81" y="728.10" width="3.5" height="1.8" fill="#f5c24e"/>
<rect x="708.60" y="729.50" width="5.27" height="66.70" fill="#cdeed9"/>
<rect x="709.48" y="730.80" width="3.5" height="65.40" fill="#22c15e"/>
<rect x="709.48" y="729.50" width="3.5" height="1.8" fill="#f5c24e"/>
<rect x="714.27" y="725.30" width="5.27" height="70.90" fill="#cdeed9"/>
<rect x="715.15" y="726.60" width="3.5" height="69.60" fill="#22c15e"/>
<rect x="715.15" y="725.30" width="3.5" height="1.8" fill="#f5c24e"/>
<rect x="719.94" y="729.10" width="5.27" height="67.10" fill="#cdeed9"/>
<rect x="720.83" y="730.40" width="3.5" height="65.80" fill="#22c15e"/>
<rect x="720.83" y="729.10" width="3.5" height="1.8" fill="#f5c24e"/>
<rect x="725.61" y="725.60" width="5.27" height="70.60" fill="#cdeed9"/>
<rect x="726.50" y="726.90" width="3.5" height="69.30" fill="#22c15e"/>
<rect x="726.50" y="725.60" width="3.5" height="1.8" fill="#f5c24e"/>
<rect x="731.28" y="729.70" width="5.27" height="66.50" fill="#cdeed9"/>
<rect x="732.17" y="731.00" width="3.5" height="65.20" fill="#22c15e"/>
<rect x="732.17" y="729.70" width="3.5" height="1.8" fill="#f5c24e"/>
<rect x="736.95" y="725.30" width="5.27" height="70.90" fill="#cdeed9"/>
<rect x="737.84" y="726.60" width="3.5" height="69.60" fill="#22c15e"/>
<rect x="737.84" y="725.30" width="3.5" height="1.8" fill="#f5c24e"/>
<rect x="742.62" y="725.90" width="5.27" height="70.30" fill="#cdeed9"/>
<rect x="743.51" y="727.20" width="3.5" height="69.00" fill="#22c15e"/>
<rect x="743.51" y="725.90" width="3.5" height="1.8" fill="#f5c24e"/>
<rect x="748.29" y="727.30" width="5.27" height="68.90" fill="#cdeed9"/>
<rect x="749.18" y="728.60" width="3.5" height="67.60" fill="#22c15e"/>
<rect x="749.18" y="727.30" width="3.5" height="1.8" fill="#f5c24e"/>
<rect x="753.96" y="726.40" width="5.27" height="69.80" fill="#cdeed9"/>
<rect x="754.85" y="727.70" width="3.5" height="68.50" fill="#22c15e"/>
<rect x="754.85" y="726.40" width="3.5" height="1.8" fill="#f5c24e"/>
<rect x="759.64" y="731.30" width="5.27" height="64.90" fill="#cdeed9"/>
<rect x="760.52" y="732.60" width="3.5" height="63.60" fill="#22c15e"/>
<rect x="760.52" y="731.30" width="3.5" height="1.8" fill="#f5c24e"/>
<rect x="765.31" y="730.20" width="5.27" height="66.00" fill="#cdeed9"/>
<rect x="766.19" y="731.50" width="3.5" height="64.70" fill="#22c15e"/>
<rect x="766.19" y="730.20" width="3.5" height="1.8" fill="#f5c24e"/>
<rect x="770.98" y="723.20" width="5.27" height="73.00" fill="#cdeed9"/>
<rect x="771.86" y="724.50" width="3.5" height="71.70" fill="#22c15e"/>
<rect x="771.86" y="723.20" width="3.5" height="1.8" fill="#f5c24e"/>
<rect x="776.65" y="728.40" width="5.27" height="67.80" fill="#cdeed9"/>
<rect x="777.53" y="729.70" width="3.5" height="66.50" fill="#22c15e"/>
<rect x="777.53" y="728.40" width="3.5" height="1.8" fill="#f5c24e"/>
<rect x="782.32" y="726.40" width="5.27" height="69.80" fill="#cdeed9"/>
<rect x="783.20" y="727.70" width="3.5" height="68.50" fill="#22c15e"/>
<rect x="783.20" y="726.40" width="3.5" height="1.8" fill="#f5c24e"/>
<rect x="787.99" y="721.70" width="5.27" height="74.50" fill="#cdeed9"/>
<rect x="788.88" y="723.00" width="3.5" height="73.20" fill="#22c15e"/>
<rect x="788.88" y="721.70" width="3.5" height="1.8" fill="#f5c24e"/>
<rect x="793.66" y="726.90" width="5.27" height="69.30" fill="#cdeed9"/>
<rect x="794.55" y="728.20" width="3.5" height="68.00" fill="#22c15e"/>
<rect x="794.55" y="726.90" width="3.5" height="1.8" fill="#f5c24e"/>
<rect x="799.33" y="727.70" width="5.27" height="68.50" fill="#cdeed9"/>
<rect x="800.22" y="729.00" width="3.5" height="67.20" fill="#22c15e"/>
<rect x="800.22" y="727.70" width="3.5" height="1.8" fill="#f5c24e"/>
<rect x="805.00" y="722.30" width="5.27" height="73.90" fill="#cdeed9"/>
<rect x="805.89" y="723.60" width="3.5" height="72.60" fill="#22c15e"/>
<rect x="805.89" y="722.30" width="3.5" height="1.8" fill="#f5c24e"/>
<rect x="810.67" y="728.10" width="5.27" height="68.10" fill="#cdeed9"/>
<rect x="811.56" y="729.40" width="3.5" height="66.80" fill="#22c15e"/>
<rect x="811.56" y="728.10" width="3.5" height="1.8" fill="#f5c24e"/>
<rect x="816.34" y="729.90" width="5.27" height="66.30" fill="#cdeed9"/>
<rect x="817.23" y="731.20" width="3.5" height="65.00" fill="#22c15e"/>
<rect x="817.23" y="729.90" width="3.5" height="1.8" fill="#f5c24e"/>
<rect x="822.01" y="723.40" width="5.27" height="72.80" fill="#cdeed9"/>
<rect x="822.90" y="724.70" width="3.5" height="71.50" fill="#22c15e"/>
<rect x="822.90" y="723.40" width="3.5" height="1.8" fill="#f5c24e"/>
<rect x="827.69" y="721.70" width="5.27" height="74.50" fill="#cdeed9"/>
<rect x="828.57" y="723.00" width="3.5" height="73.20" fill="#22c15e"/>
<rect x="828.57" y="721.70" width="3.5" height="1.8" fill="#f5c24e"/>
<rect x="833.36" y="728.70" width="5.27" height="67.50" fill="#cdeed9"/>
<rect x="834.24" y="730.00" width="3.5" height="66.20" fill="#22c15e"/>
<rect x="834.24" y="728.70" width="3.5" height="1.8" fill="#f5c24e"/>
<rect x="839.03" y="723.80" width="5.27" height="72.40" fill="#cdeed9"/>
<rect x="839.91" y="725.10" width="3.5" height="71.10" fill="#22c15e"/>
<rect x="839.91" y="723.80" width="3.5" height="1.8" fill="#f5c24e"/>
<rect x="844.70" y="726.90" width="5.27" height="69.30" fill="#cdeed9"/>
<rect x="845.58" y="728.20" width="3.5" height="68.00" fill="#22c15e"/>
<rect x="845.58" y="726.90" width="3.5" height="1.8" fill="#f5c24e"/>
<rect x="850.37" y="719.60" width="5.27" height="76.60" fill="#cdeed9"/>
<rect x="851.25" y="720.90" width="3.5" height="75.30" fill="#22c15e"/>
<rect x="851.25" y="719.60" width="3.5" height="1.8" fill="#f5c24e"/>
<rect x="856.04" y="728.10" width="5.27" height="68.10" fill="#cdeed9"/>
<rect x="856.93" y="729.40" width="3.5" height="66.80" fill="#22c15e"/>
<rect x="856.93" y="728.10" width="3.5" height="1.8" fill="#f5c24e"/>
<rect x="861.71" y="728.10" width="5.27" height="68.10" fill="#cdeed9"/>
<rect x="862.60" y="729.40" width="3.5" height="66.80" fill="#22c15e"/>
<rect x="862.60" y="728.10" width="3.5" height="1.8" fill="#f5c24e"/>
<rect x="867.38" y="721.40" width="5.27" height="74.80" fill="#cdeed9"/>
<rect x="868.27" y="722.70" width="3.5" height="73.50" fill="#22c15e"/>
<rect x="868.27" y="721.40" width="3.5" height="1.8" fill="#f5c24e"/>
<rect x="873.05" y="727.70" width="5.27" height="68.50" fill="#cdeed9"/>
<rect x="873.94" y="729.00" width="3.5" height="67.20" fill="#22c15e"/>
<rect x="873.94" y="727.70" width="3.5" height="1.8" fill="#f5c24e"/>
<rect x="878.72" y="731.60" width="5.27" height="64.60" fill="#cdeed9"/>
<rect x="879.61" y="732.90" width="3.5" height="63.30" fill="#22c15e"/>
<rect x="879.61" y="731.60" width="3.5" height="1.8" fill="#f5c24e"/>
<rect x="884.39" y="721.10" width="5.27" height="75.10" fill="#cdeed9"/>
<rect x="885.28" y="722.40" width="3.5" height="73.80" fill="#22c15e"/>
<rect x="885.28" y="721.10" width="3.5" height="1.8" fill="#f5c24e"/>
<rect x="890.06" y="724.60" width="5.27" height="71.60" fill="#cdeed9"/>
<rect x="890.95" y="725.90" width="3.5" height="70.30" fill="#22c15e"/>
<rect x="890.95" y="724.60" width="3.5" height="1.8" fill="#f5c24e"/>
  <rect x="74.3" y="796" width="821" height="1" fill="#b8b8c0"/>
  <g fill="#9a9aa2">
    <rect x="138.5" y="796" width="1" height="3"/>
    <rect x="274.6" y="796" width="1" height="3"/>
    <rect x="410.7" y="796" width="1" height="3"/>
    <rect x="546.8" y="796" width="1" height="3"/>
    <rect x="682.9" y="796" width="1" height="3"/>
    <rect x="819.1" y="796" width="1" height="3"/>
  </g>
  <rect x="28" y="841" width="892" height="1" fill="#e6e7ee"/>

  <!-- workers -->
  <rect x="43.5" y="908.5" width="146.8" height="21.8" rx="3" fill="#fff" stroke="#dcdde6" stroke-width="1"/>
  <rect x="28" y="946" width="892" height="33" fill="#f4f4f7"/>
  <rect x="28" y="979" width="892" height="1" fill="#e6e7ee"/>
  <rect x="28" y="1007" width="892" height="1" fill="#e6e7ee"/>
  <circle cx="47.5" cy="993.6" r="2.6" fill="#1fb46c"/>
</svg>
<!-- sort icons -->
<svg style="left:0;top:0" width="957" height="1024">
  <path d="M79.0,959.8 L82.0,957.2 L85.0,959.8 M79.0,963.2 L82.0,965.8 L85.0,963.2" stroke="#9a9aa4" stroke-width="1" fill="none"/>
<path d="M215.2,959.8 L218.2,957.2 L221.2,959.8 M215.2,963.2 L218.2,965.8 L221.2,963.2" stroke="#9a9aa4" stroke-width="1" fill="none"/>
<path d="M315.0,959.8 L318.0,957.2 L321.0,959.8 M315.0,963.2 L318.0,965.8 L321.0,963.2" stroke="#9a9aa4" stroke-width="1" fill="none"/>
<path d="M412.7,959.8 L415.7,957.2 L418.7,959.8 M412.7,963.2 L415.7,965.8 L418.7,963.2" stroke="#9a9aa4" stroke-width="1" fill="none"/>
<path d="M521.3,959.8 L524.3,957.2 L527.3,959.8 M521.3,963.2 L524.3,965.8 L527.3,963.2" stroke="#9a9aa4" stroke-width="1" fill="none"/>
<path d="M674.4,959.8 L677.4,957.2 L680.4,959.8 M674.4,963.2 L677.4,965.8 L680.4,963.2" stroke="#9a9aa4" stroke-width="1" fill="none"/>
<path d="M846.2,959.8 L849.2,957.2 L852.2,959.8 M846.2,963.2 L849.2,965.8 L852.2,963.2" stroke="#9a9aa4" stroke-width="1" fill="none"/>
</svg>
<div class="t" style="top:14px;font-size:15.2px;line-height:17px;font-weight:700;color:#15151f;letter-spacing:0.906px;left:34.70px;-webkit-text-stroke:0.25px #15151f">Kryptex</div>
<div class="t" style="top:19px;font-size:9px;line-height:10px;font-weight:400;color:#5aa562;left:112.40px;-webkit-text-stroke:0.25px #5aa562;transform:scaleX(0.78);transform-origin:0 0">ETC</div>
<div class="t" style="top:17px;font-size:10px;line-height:11px;font-weight:400;color:#2c6cf2;letter-spacing:0.799px;left:498.20px;-webkit-text-stroke:0.1px #2c6cf2">Get Kryptex Pool referral link</div>
<div class="t" style="top:17px;font-size:10px;line-height:11px;font-weight:400;color:#15151f;letter-spacing:1.092px;left:695.00px;-webkit-text-stroke:0.1px #15151f">Hardware</div>
<div class="t" style="top:17px;font-size:10px;line-height:11px;font-weight:400;color:#15151f;letter-spacing:1.328px;left:775.00px;-webkit-text-stroke:0.1px #15151f">Support</div>
<div class="t" style="top:17px;font-size:11.5px;line-height:12px;font-weight:400;color:#15151f;left:844.00px;-webkit-text-stroke:0.25px #15151f">$</div>
<div class="t" style="top:69px;font-size:10.5px;line-height:12px;font-weight:400;color:#1f1d2b;letter-spacing:0.877px;left:255.80px;-webkit-text-stroke:0.1px #1f1d2b">Information</div>
<div class="t" style="top:69px;font-size:10.5px;line-height:12px;font-weight:400;color:#1f1d2b;letter-spacing:0.627px;left:331.00px;-webkit-text-stroke:0.1px #1f1d2b">Top Miners</div>
<div class="t" style="top:69px;font-size:10.5px;line-height:12px;font-weight:400;color:#1f1d2b;letter-spacing:0.538px;left:401.70px;-webkit-text-stroke:0.1px #1f1d2b">Pool Hashrate</div>
<div class="t" style="top:69px;font-size:10.5px;line-height:12px;font-weight:400;color:#1f1d2b;letter-spacing:0.665px;left:488.70px;-webkit-text-stroke:0.1px #1f1d2b">Network Hashrate</div>
<div class="t" style="top:69px;font-size:10.5px;line-height:12px;font-weight:400;color:#1f1d2b;letter-spacing:0.828px;left:596.20px;-webkit-text-stroke:0.1px #1f1d2b">Network Difficulty</div>
<div class="t" style="top:129px;font-size:12.3px;line-height:14px;font-weight:400;color:#15151f;letter-spacing:0.642px;left:75.70px;-webkit-text-stroke:0.25px #15151f">Ethereum Classic mining pool</div>
<div class="t" style="top:145px;font-size:6.8px;line-height:7px;font-weight:400;color:#a4a4ae;letter-spacing:0.833px;left:76.00px;">PPS+: 1%</div>
<div class="t" style="top:134px;font-size:10px;line-height:11px;font-weight:400;color:#7a7a86;letter-spacing:0.643px;left:311.30px;">0x6ca58f163fae55dc244c0f45f46a08202d643d8c</div>
<div class="t" style="top:207px;font-size:18.5px;line-height:21px;font-weight:400;color:#15151f;letter-spacing:1.138px;left:51.20px;-webkit-text-stroke:0.4px #15151f">0x6ca58f163fae55dc244c0f45f46a08202d643d8c</div>
<div class="t" style="top:212px;font-size:8.7px;line-height:10px;font-weight:400;color:#2c6cf2;letter-spacing:0.918px;left:838.60px;-webkit-text-stroke:0.35px #2c6cf2">Monitoring bot</div>
<div class="t" style="top:276px;font-size:10px;line-height:11px;font-weight:400;color:#2c6cf2;letter-spacing:0.832px;left:376.80px;-webkit-text-stroke:0.2px #2c6cf2">Statistics</div>
<div class="t" style="top:275px;font-size:10px;line-height:11px;font-weight:400;color:#15151f;letter-spacing:0.977px;left:466.40px;-webkit-text-stroke:0.2px #15151f">Payouts</div>
<div class="t" style="top:275px;font-size:10px;line-height:11px;font-weight:400;color:#15151f;letter-spacing:1.080px;left:548.80px;-webkit-text-stroke:0.2px #15151f">Settings</div>
<div class="t" style="top:324px;font-size:8.5px;line-height:10px;font-weight:400;color:#5a5a66;letter-spacing:0.741px;left:85.20px;">Workers (24H)</div>
<div class="t" style="top:324px;font-size:8.5px;line-height:10px;font-weight:400;color:#5a5a66;letter-spacing:0.621px;left:243.90px;">Current Hashrate (10M)</div>
<div class="t" style="top:324px;font-size:8.5px;line-height:10px;font-weight:400;color:#5a5a66;letter-spacing:0.673px;left:423.50px;">Average Hashrate (6H)</div>
<div class="t" style="top:324px;font-size:8.5px;line-height:10px;font-weight:400;color:#5a5a66;letter-spacing:0.896px;left:603.40px;">Unconfirmed Balance</div>
<div class="t" style="top:324px;font-size:8.5px;line-height:10px;font-weight:400;color:#5a5a66;letter-spacing:0.797px;left:812.70px;">Balance</div>
<div class="t" style="top:349px;font-size:19px;line-height:21px;font-weight:700;color:#15151f;left:113.00px;">1</div>
<div class="t" style="top:349px;font-size:19px;line-height:21px;font-weight:700;color:#15151f;letter-spacing:-0.251px;left:253.30px;">4.12 GH/s</div>
<div class="t" style="top:349px;font-size:19px;line-height:21px;font-weight:700;color:#15151f;letter-spacing:0.336px;left:429.00px;">4.02 GH/s</div>
<div class="t" style="top:349px;font-size:19px;line-height:21px;font-weight:700;color:#15151f;letter-spacing:1.450px;left:607.20px;">0.000000</div>
<div class="t" style="top:349px;font-size:19px;line-height:21px;font-weight:700;color:#15151f;letter-spacing:-0.493px;left:792.40px;">0.016651</div>
<div class="t" style="top:372px;font-size:8.5px;line-height:10px;font-weight:400;color:#6a6a76;letter-spacing:0.620px;left:631.20px;">0.00 USD</div>
<div class="t" style="top:372px;font-size:8.5px;line-height:10px;font-weight:400;color:#6a6a76;letter-spacing:0.477px;left:810.10px;">0.49 USD</div>
<div class="t" style="top:431px;font-size:18.5px;line-height:21px;font-weight:400;color:#15151f;letter-spacing:0.876px;left:45.70px;-webkit-text-stroke:0.55px #15151f">Hashrate (24h)</div>
<div class="t" style="top:652px;font-size:18.5px;line-height:21px;font-weight:400;color:#15151f;letter-spacing:0.695px;left:45.00px;-webkit-text-stroke:0.55px #15151f">Shares (24h)</div>
<div class="t" style="top:873px;font-size:19.5px;line-height:22px;font-weight:400;color:#15151f;letter-spacing:0.844px;left:45.50px;-webkit-text-stroke:0.75px #15151f">Workers</div>
<div class="t" style="top:913px;font-size:9.5px;line-height:11px;font-weight:400;color:#a8a8b2;letter-spacing:0.862px;left:52.40px;">Search worker</div>
<div class="t" style="top:955px;font-size:10.5px;line-height:12px;font-weight:700;color:#15151f;letter-spacing:0.897px;left:44.70px;">Name</div>
<div class="t" style="top:955px;font-size:10.5px;line-height:12px;font-weight:700;color:#15151f;letter-spacing:0.593px;left:183.00px;">Mode</div>
<div class="t" style="top:955px;font-size:10.5px;line-height:12px;font-weight:700;color:#15151f;letter-spacing:0.496px;left:285.50px;">Valid</div>
<div class="t" style="top:955px;font-size:10.5px;line-height:12px;font-weight:700;color:#15151f;letter-spacing:0.198px;left:383.80px;">Stale</div>
<div class="t" style="top:955px;font-size:10.5px;line-height:12px;font-weight:700;color:#15151f;letter-spacing:0.322px;left:483.10px;">Invalid</div>
<div class="t" style="top:955px;font-size:10.5px;line-height:12px;font-weight:700;color:#15151f;letter-spacing:0.296px;left:594.60px;">Hashrate (24h)</div>
<div class="t" style="top:955px;font-size:10.5px;line-height:12px;font-weight:700;color:#15151f;letter-spacing:0.163px;left:765.20px;">Hashrate (10m)</div>
<div class="t" style="top:987px;font-size:10.5px;line-height:12px;font-weight:400;color:#3a6ff0;letter-spacing:0.906px;left:59.10px;">pro</div>
<div class="t" style="top:987px;font-size:10.5px;line-height:12px;font-weight:400;color:#80808a;letter-spacing:0.192px;left:182.80px;">PPS</div>
<div class="t" style="top:987px;font-size:10.5px;line-height:12px;font-weight:400;color:#80808a;letter-spacing:0.724px;left:285.50px;">79946</div>
<div class="t" style="top:987px;font-size:10.5px;line-height:12px;font-weight:400;color:#80808a;letter-spacing:0.334px;left:383.80px;">995</div>
<div class="t" style="top:987px;font-size:10.5px;line-height:12px;font-weight:400;color:#80808a;letter-spacing:1.213px;left:483.10px;">47</div>
<div class="t" style="top:987px;font-size:10.5px;line-height:12px;font-weight:400;color:#80808a;letter-spacing:-0.248px;left:594.60px;">4.01 GH/s</div>
<div class="t" style="top:987px;font-size:10.5px;line-height:12px;font-weight:400;color:#80808a;letter-spacing:-0.398px;left:765.20px;">4.13 GH/s</div>
<div class="t" style="top:482px;font-size:9.5px;line-height:11px;font-weight:400;color:#94949c;letter-spacing:-0.267px;left:52.86px;">5.00 GH/s</div>
<div class="t" style="top:499px;font-size:9.5px;line-height:11px;font-weight:400;color:#94949c;letter-spacing:-0.267px;left:52.86px;">4.00 GH/s</div>
<div class="t" style="top:517px;font-size:9.5px;line-height:11px;font-weight:400;color:#94949c;letter-spacing:-0.267px;left:52.86px;">3.00 GH/s</div>
<div class="t" style="top:534px;font-size:9.5px;line-height:11px;font-weight:400;color:#94949c;letter-spacing:-0.267px;left:52.86px;">2.00 GH/s</div>
<div class="t" style="top:552px;font-size:9.5px;line-height:11px;font-weight:400;color:#94949c;letter-spacing:-0.267px;left:52.86px;">1.00 GH/s</div>
<div class="t" style="top:570px;font-size:9.5px;line-height:11px;font-weight:400;color:#94949c;letter-spacing:-0.277px;left:72.42px;">0 H/s</div>
<div class="t" style="top:579px;font-size:9.5px;line-height:11px;font-weight:400;color:#94949c;letter-spacing:-0.476px;left:149.06px;">12:00</div>
<div class="t" style="top:579px;font-size:9.5px;line-height:11px;font-weight:400;color:#94949c;letter-spacing:-0.476px;left:281.76px;">16:00</div>
<div class="t" style="top:579px;font-size:9.5px;line-height:11px;font-weight:400;color:#94949c;letter-spacing:-0.476px;left:414.46px;">20:00</div>
<div class="t" style="top:579px;font-size:9.5px;line-height:11px;font-weight:400;color:#94949c;letter-spacing:-0.465px;left:547.40px;">6 Jun</div>
<div class="t" style="top:579px;font-size:9.5px;line-height:11px;font-weight:400;color:#94949c;letter-spacing:-0.476px;left:679.86px;">04:00</div>
<div class="t" style="top:579px;font-size:9.5px;line-height:11px;font-weight:400;color:#94949c;letter-spacing:-0.476px;left:812.46px;">08:00</div>
<div class="t" style="top:703px;font-size:9.5px;line-height:11px;font-weight:400;color:#94949c;letter-spacing:-0.396px;left:53.73px;">700</div>
<div class="t" style="top:716px;font-size:9.5px;line-height:11px;font-weight:400;color:#94949c;letter-spacing:-0.396px;left:53.73px;">600</div>
<div class="t" style="top:728px;font-size:9.5px;line-height:11px;font-weight:400;color:#94949c;letter-spacing:-0.396px;left:53.73px;">500</div>
<div class="t" style="top:741px;font-size:9.5px;line-height:11px;font-weight:400;color:#94949c;letter-spacing:-0.396px;left:53.73px;">400</div>
<div class="t" style="top:753px;font-size:9.5px;line-height:11px;font-weight:400;color:#94949c;letter-spacing:-0.396px;left:53.73px;">300</div>
<div class="t" style="top:766px;font-size:9.5px;line-height:11px;font-weight:400;color:#94949c;letter-spacing:-0.396px;left:53.73px;">200</div>
<div class="t" style="top:778px;font-size:9.5px;line-height:11px;font-weight:400;color:#94949c;letter-spacing:-0.396px;left:53.73px;">100</div>
<div class="t" style="top:791px;font-size:9.5px;line-height:11px;font-weight:400;color:#94949c;left:63.77px;">0</div>
<div class="t" style="top:800px;font-size:9.5px;line-height:11px;font-weight:400;color:#94949c;letter-spacing:-0.476px;left:128.86px;">12:00</div>
<div class="t" style="top:800px;font-size:9.5px;line-height:11px;font-weight:400;color:#94949c;letter-spacing:-0.476px;left:264.96px;">16:00</div>
<div class="t" style="top:800px;font-size:9.5px;line-height:11px;font-weight:400;color:#94949c;letter-spacing:-0.476px;left:401.06px;">20:00</div>
<div class="t" style="top:800px;font-size:9.5px;line-height:11px;font-weight:400;color:#94949c;letter-spacing:-0.465px;left:537.40px;">6 Jun</div>
<div class="t" style="top:800px;font-size:9.5px;line-height:11px;font-weight:400;color:#94949c;letter-spacing:-0.476px;left:673.26px;">04:00</div>
<div class="t" style="top:800px;font-size:9.5px;line-height:11px;font-weight:400;color:#94949c;letter-spacing:-0.476px;left:809.36px;">08:00</div>
</body></html>
